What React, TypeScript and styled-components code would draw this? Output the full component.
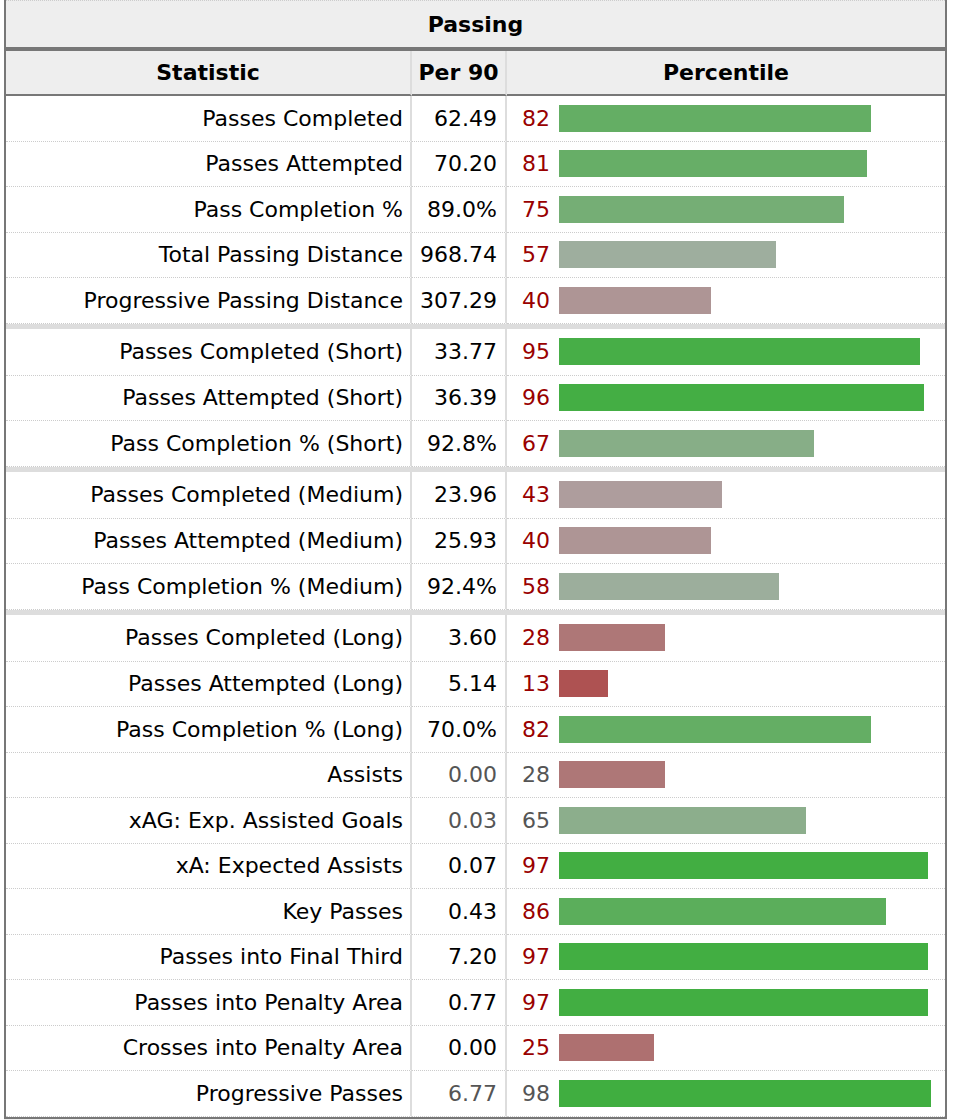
import React from 'react'
import styled, {createGlobalStyle} from 'styled-components'

const GlobalStyle = createGlobalStyle`
  body {
    margin: 0;
    background: #fff;
    font-family: "DejaVu Sans", Verdana, sans-serif;
    font-size: 22px;
    color: #000;
  }
`

interface Stat {
  name: string
  per90: string
  pct: number
  muted?: boolean
}

const groups: Stat[][] = [
  [
    {name: 'Passes Completed', per90: '62.49', pct: 82},
    {name: 'Passes Attempted', per90: '70.20', pct: 81},
    {name: 'Pass Completion %', per90: '89.0%', pct: 75},
    {name: 'Total Passing Distance', per90: '968.74', pct: 57},
    {name: 'Progressive Passing Distance', per90: '307.29', pct: 40},
  ],
  [
    {name: 'Passes Completed (Short)', per90: '33.77', pct: 95},
    {name: 'Passes Attempted (Short)', per90: '36.39', pct: 96},
    {name: 'Pass Completion % (Short)', per90: '92.8%', pct: 67},
  ],
  [
    {name: 'Passes Completed (Medium)', per90: '23.96', pct: 43},
    {name: 'Passes Attempted (Medium)', per90: '25.93', pct: 40},
    {name: 'Pass Completion % (Medium)', per90: '92.4%', pct: 58},
  ],
  [
    {name: 'Passes Completed (Long)', per90: '3.60', pct: 28},
    {name: 'Passes Attempted (Long)', per90: '5.14', pct: 13},
    {name: 'Pass Completion % (Long)', per90: '70.0%', pct: 82},
    {name: 'Assists', per90: '0.00', pct: 28, muted: true},
    {name: 'xAG: Exp. Assisted Goals', per90: '0.03', pct: 65, muted: true},
    {name: 'xA: Expected Assists', per90: '0.07', pct: 97},
    {name: 'Key Passes', per90: '0.43', pct: 86},
    {name: 'Passes into Final Third', per90: '7.20', pct: 97},
    {name: 'Passes into Penalty Area', per90: '0.77', pct: 97},
    {name: 'Crosses into Penalty Area', per90: '0.00', pct: 25},
    {name: 'Progressive Passes', per90: '6.77', pct: 98, muted: true},
  ],
]

// red below 50, grey around 50, green above
const barColor = (pct: number) => {
  if (pct >= 50) {
    const v = Math.round(174 - (pct - 50) * 2.3)
    return `rgb(${v}, 174, ${v})`
  }
  const v = Math.round(174 - (50 - pct) * 2.5)
  return `rgb(174, ${v}, ${v})`
}

const Wrapper = styled.div`
  margin-left: 4px;
  width: 943px;
  border-left: 2px solid #777;
  border-right: 2px solid #777;
  box-sizing: border-box;
`

const Table = styled.table`
  width: 100%;
  border-collapse: separate;
  border-spacing: 0;
  table-layout: fixed;
`

const Caption = styled.th`
  height: 46px;
  padding: 0;
  background: #eee;
  border-top: 1px dotted #ccc;
  border-bottom: 4px solid #777;
  font-weight: bold;
  text-align: center;
`

const HeadCell = styled.th<{ $divider?: boolean }>`
  height: 43px;
  padding: 0;
  background: #eee;
  border-bottom: 2px solid #777;
  border-right: ${p => p.$divider ? '2px solid #ddd' : 'none'};
  font-weight: bold;
  text-align: center;
`

const Cell = styled.td<{ $divider?: boolean; $groupStart?: boolean; $muted?: boolean; $pad?: number }>`
  height: ${p => p.$groupStart ? '46px' : '44.5px'};
  padding: 0 ${p => p.$pad ?? 7}px 0 0;
  border-bottom: 1px dotted #ccc;
  border-top: ${p => p.$groupStart ? '5px solid #ddd' : 'none'};
  border-right: ${p => p.$divider ? '2px solid #ddd' : 'none'};
  text-align: right;
  white-space: nowrap;
  color: ${p => p.$muted ? '#555' : '#000'};
`

const PctCell = styled(Cell)`
  padding: 0 0 0 7px;
  text-align: left;
`

const PctInner = styled.div`
  display: flex;
  align-items: center;
  gap: 9px;
`

const PctValue = styled.span<{ $muted?: boolean }>`
  width: 36px;
  text-align: right;
  color: ${p => p.$muted ? '#555' : '#900'};
`

const Bar = styled.div`
  height: 27px;
`

const Footer = styled.div`
  margin-left: 4px;
  width: 943px;
  height: 10px;
  background: #eee;
  border-top: 2px solid #777;
`

const App = () => (
  <>
    <GlobalStyle/>
    <Wrapper>
      <Table>
        <colgroup>
          <col style={{width: 406}}/>
          <col style={{width: 95}}/>
          <col/>
        </colgroup>
        <thead>
          <tr>
            <Caption colSpan={3}>Passing</Caption>
          </tr>
          <tr>
            <HeadCell $divider>Statistic</HeadCell>
            <HeadCell $divider>Per 90</HeadCell>
            <HeadCell>Percentile</HeadCell>
          </tr>
        </thead>
        {groups.map((rows, gi) => (
          <tbody key={gi}>
            {rows.map((row, ri) => {
              const start = gi > 0 && ri === 0
              return (
                <tr key={row.name}>
                  <Cell $divider $groupStart={start}>{row.name}</Cell>
                  <Cell $divider $groupStart={start} $muted={row.muted} $pad={8}>{row.per90}</Cell>
                  <PctCell $groupStart={start}>
                    <PctInner>
                      <PctValue $muted={row.muted}>{row.pct}</PctValue>
                      <Bar style={{width: row.pct * 3.8, background: barColor(row.pct)}}/>
                    </PctInner>
                  </PctCell>
                </tr>
              )
            })}
          </tbody>
        ))}
      </Table>
    </Wrapper>
    <Footer/>
  </>
)

export default App
